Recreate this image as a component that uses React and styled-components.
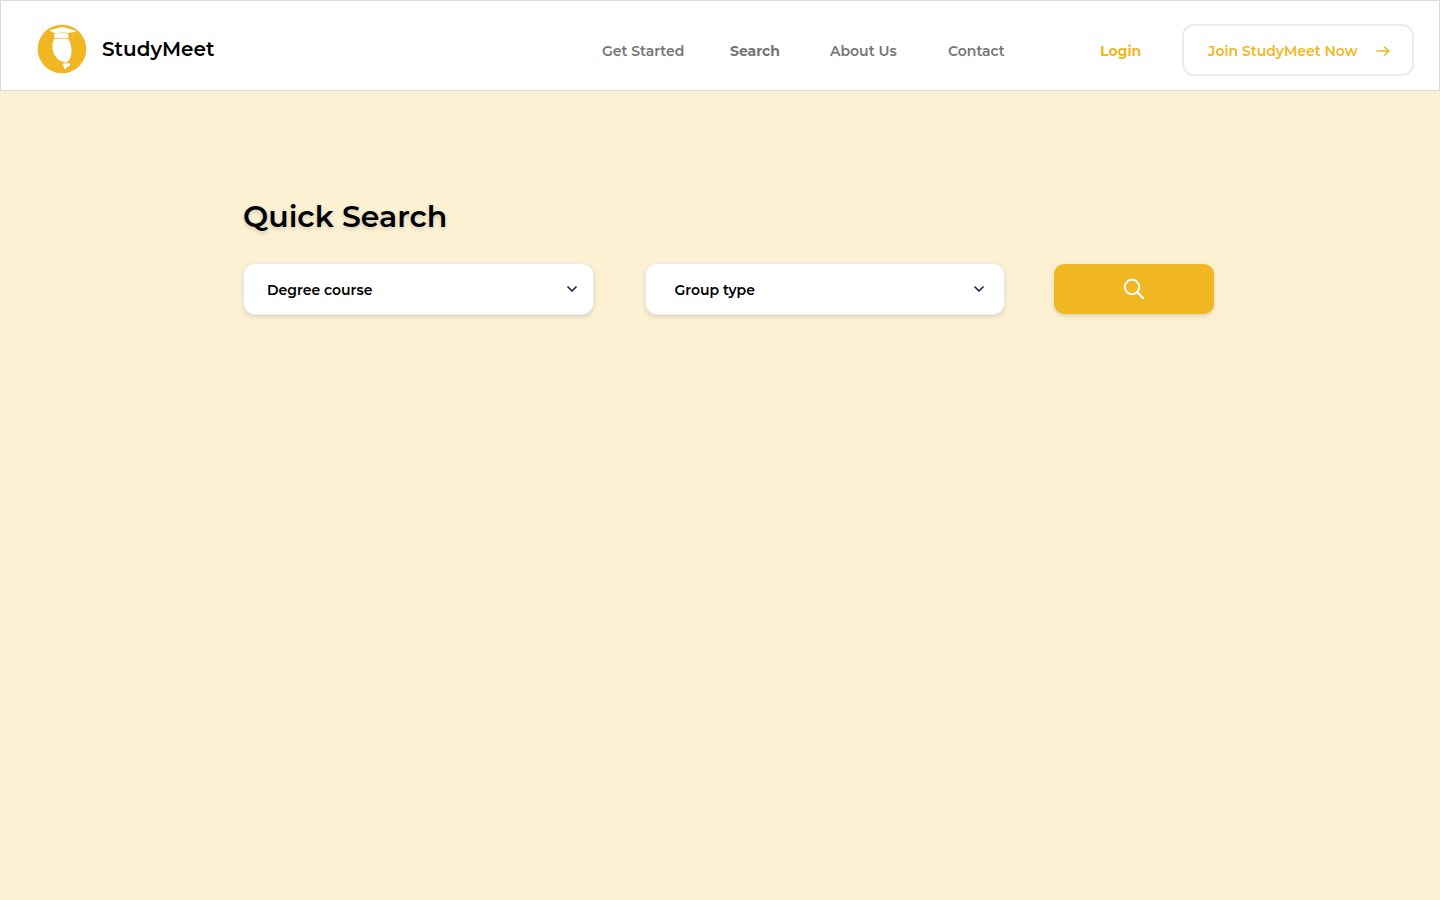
import React from "react";
import styled, { createGlobalStyle, ThemeProvider } from "styled-components";

const theme = {
  amber: "#f0b722",
  cream: "#fcf1d3",
  line: "#dadada",
  softLine: "#ebebeb",
  grey: "#757575",
  ink: "#1e2343",
};

const GlobalStyle = createGlobalStyle`
  *, *::before, *::after { box-sizing: border-box; }
  body {
    margin: 0;
    background: ${theme.cream};
    color: #000;
    font-family: Montserrat, Inter, "Liberation Sans", sans-serif;
  }
  button, select { font-family: inherit; }
`;

const Header = styled.header`
  display: flex;
  align-items: center;
  justify-content: space-between;
  flex-wrap: wrap;
  min-height: 91px;
  padding: 8px 25px 0 36px;
  background: #fff;
  border: 1px solid ${({ theme }) => theme.line};
`;

const Brand = styled.a`
  display: flex;
  align-items: center;
  gap: 15px;
  padding-bottom: 2px;
  color: #000;
  font-size: 20px;
  font-weight: 600;
  line-height: 28px;
  text-decoration: none;
`;

const LogoMark = styled.svg`
  display: block;
  width: 50px;
  height: 50px;
`;

const Nav = styled.nav`
  display: grid;
  grid-template-columns: 128px 100px 118px 152px 82px auto;
  align-items: center;
`;

const NavLink = styled.a`
  padding-top: 2px;
  color: ${({ theme, $accent }) => ($accent ? theme.amber : theme.grey)};
  font-size: 14px;
  font-weight: ${({ $strong }) => ($strong ? 700 : 600)};
  line-height: 20px;
  text-decoration: none;
`;

const JoinButton = styled.button`
  display: flex;
  align-items: center;
  justify-content: space-between;
  width: 232px;
  height: 52px;
  padding: 2px 22px 0 24px;
  background: #fff;
  border: 2px solid ${({ theme }) => theme.softLine};
  border-radius: 12px;
  color: ${({ theme }) => theme.amber};
  font-size: 14px;
  font-weight: 600;
  line-height: 20px;
  white-space: nowrap;
  cursor: pointer;
`;

const Main = styled.main`
  padding: 106px 226px 48px 243px;

  @media (max-width: 1100px) {
    padding: 48px 32px;
  }
`;

const Title = styled.h1`
  margin: 0 0 26px;
  font-size: 30px;
  font-weight: 600;
  line-height: 40px;
  text-shadow: 0 2px 4px rgba(0, 0, 0, 0.16);
`;

const SearchForm = styled.form`
  display: flex;
  align-items: flex-start;
`;

const Field = styled.div`
  position: relative;
  flex: ${({ $grow }) => $grow} 1 0;
  margin-right: ${({ $after }) => $after}px;
`;

const Select = styled.select`
  display: block;
  width: 100%;
  height: 52px;
  padding: 2px 40px 0 ${({ $inset }) => $inset}px;
  appearance: none;
  background: #fff;
  border: 1px solid ${({ theme }) => theme.softLine};
  border-radius: 12px;
  box-shadow: 0 2px 4px rgba(0, 0, 0, 0.12);
  color: #000;
  font-size: 14px;
  font-weight: 600;
  line-height: 20px;
  cursor: pointer;
`;

const Chevron = styled.svg`
  position: absolute;
  top: 50%;
  right: ${({ $end }) => $end}px;
  width: 12px;
  height: 8px;
  margin-top: -4px;
  pointer-events: none;
`;

const SearchButton = styled.button`
  display: flex;
  flex: 0 0 160px;
  align-items: center;
  justify-content: center;
  height: 50px;
  margin-top: 1px;
  padding: 0;
  background: ${({ theme }) => theme.amber};
  border: 0;
  border-radius: 10px;
  box-shadow: 0 2px 4px rgba(0, 0, 0, 0.12);
  cursor: pointer;
`;

function Logo() {
  return (
    <LogoMark viewBox="21 24 150 150" aria-hidden="true">
      <circle cx="96" cy="99" r="73" fill={theme.amber} />
      <g fill="#fff">
        <path d="M57 43 97 33 141 45 114 52 96 47 77 53Z" />
        <path d="M73 54 96 49 115 54V67Q94 64 73 67Z" />
        <path d="M73 69Q94 66 114 69C124 80 127 103 123 119C120 132 115 137 108 138L109 143C115 139 121 143 120 148C119 153 114 153 111 151C112 157 109 160 105 158C100 157 101 152 102 149C97 150 97 145 99 143C101 141 103 143 105 143L104 138C90 138 77 127 70 109C65 94 66 79 73 69Z" />
        <path d="M129 47 131 46 132 65 130 65Z" opacity="0.35" />
      </g>
    </LogoMark>
  );
}

function SelectField({ id, label, options, grow, after, inset, end }) {
  return (
    <Field $grow={grow} $after={after}>
      <Select id={id} aria-label={label} $inset={inset} defaultValue="">
        <option value="">{label}</option>
        {options.map((option) => (
          <option key={option}>{option}</option>
        ))}
      </Select>
      <Chevron $end={end} viewBox="0 0 12 8" fill="none" aria-hidden="true">
        <path d="M2 2 6 6 10 2" stroke={theme.ink} strokeWidth="1.7" strokeLinecap="round" strokeLinejoin="round" />
      </Chevron>
    </Field>
  );
}

export default function App() {
  return (
    <ThemeProvider theme={theme}>
      <GlobalStyle />
      <Header>
        <Brand href="#home">
          <Logo />
          StudyMeet
        </Brand>
        <Nav>
          <NavLink href="#start">Get Started</NavLink>
          <NavLink href="#search" $strong>Search</NavLink>
          <NavLink href="#about">About Us</NavLink>
          <NavLink href="#contact">Contact</NavLink>
          <NavLink href="#login" $strong $accent>Login</NavLink>
          <JoinButton type="button">
            Join StudyMeet Now
            <svg width="14" height="12" viewBox="0 0 14 12" fill="none" aria-hidden="true">
              <path d="M1 6H13M8.5 2 13 6 8.5 10" stroke="currentColor" strokeWidth="1.6" strokeLinecap="round" strokeLinejoin="round" />
            </svg>
          </JoinButton>
        </Nav>
      </Header>
      <Main>
        <Title>Quick Search</Title>
        <SearchForm onSubmit={(event) => event.preventDefault()}>
          <SelectField id="course" label="Degree course" options={[]} grow={350} after={51} inset={23} end={16} />
          <SelectField id="group" label="Group type" options={[]} grow={360} after={49} inset={29} end={20} />
          <SearchButton type="submit" aria-label="Search">
            <svg width="22" height="22" viewBox="0 0 22 22" fill="none" aria-hidden="true">
              <circle cx="9" cy="9" r="7.2" stroke="#fff" strokeWidth="2" />
              <path d="M14.2 14.2 20 20" stroke="#fff" strokeWidth="2.4" strokeLinecap="round" />
            </svg>
          </SearchButton>
        </SearchForm>
      </Main>
    </ThemeProvider>
  );
}
